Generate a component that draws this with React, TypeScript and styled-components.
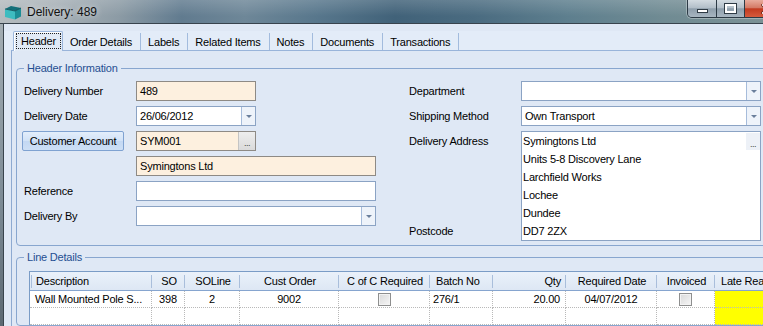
import React from "react";
import styled, { createGlobalStyle } from "styled-components";

const FONT = `"Liberation Sans", Arial, sans-serif`;

const GlobalStyle = createGlobalStyle`
  html, body {
    margin: 0;
    padding: 0;
    background: #dfe8f5;
  }
  body {
    font-family: ${FONT};
    font-size: 11px;
    letter-spacing: -0.2px;
    color: #000;
  }
`;

const tabs = [
  "Header",
  "Order Details",
  "Labels",
  "Related Items",
  "Notes",
  "Documents",
  "Transactions",
];

type Align = "left" | "center" | "right";

const columns: { title: string; width: number; align: Align }[] = [
  { title: "Description", width: 122, align: "left" },
  { title: "SO", width: 33, align: "center" },
  { title: "SOLine", width: 55, align: "center" },
  { title: "Cust Order", width: 99, align: "center" },
  { title: "C of C Required", width: 91, align: "center" },
  { title: "Batch No", width: 63, align: "left" },
  { title: "Qty", width: 73, align: "right" },
  { title: "Required Date", width: 91, align: "center" },
  { title: "Invoiced", width: 58, align: "center" },
  { title: "Late Reason", width: 86, align: "left" },
];

const address = [
  "Symingtons Ltd",
  "Units 5-8 Discovery Lane",
  "Larchfield Works",
  "Lochee",
  "Dundee",
  "DD7 2ZX",
];

const App = () => {
  return (
    <>
      <GlobalStyle />
      <Screen>
        <Window>
          <TitleBar>
            <TitleIcon width="18" height="16" viewBox="0 0 18 16">
              <path d="M1 5 L7 2 L17 4 L11 7 Z" fill="#136f79" />
              <path d="M1 5 L11 7 L11 15.5 L1 13 Z" fill="#3dbcc0" />
              <path d="M11 7 L17 4 L17 12.5 L11 15.5 Z" fill="#1b8d95" />
              <path d="M1 5 L11 7 L17 4" fill="none" stroke="#0c4d55" strokeWidth="0.8" />
            </TitleIcon>
            <TitleText>Delivery: 489</TitleText>
            <WindowControls>
              <CtrlButton $w={28}>
                <MinGlyph />
              </CtrlButton>
              <CtrlButton $w={27}>
                <MaxGlyph />
              </CtrlButton>
              <CtrlButton $w={44} $close>
                <svg width="12" height="10" viewBox="0 0 12 10">
                  <path
                    d="M2 1 L10 9 M10 1 L2 9"
                    stroke="#5a1a10"
                    strokeWidth="3.4"
                    strokeLinecap="round"
                  />
                  <path
                    d="M2 1 L10 9 M10 1 L2 9"
                    stroke="#fff"
                    strokeWidth="2"
                    strokeLinecap="round"
                  />
                </svg>
              </CtrlButton>
            </WindowControls>
          </TitleBar>
          <Body>
            <FrameEdge />
            <Client>
              <TabStrip>
                {tabs.map((t, i) =>
                  i === 0 ? (
                    <ActiveTab key={t}>
                      <FocusRect>{t}</FocusRect>
                    </ActiveTab>
                  ) : (
                    <Tab key={t}>{t}</Tab>
                  )
                )}
              </TabStrip>
              <TabPage>
                <GroupBox $top={11}>
                  <Legend>Header Information</Legend>
                  <GroupBody $pad="6px 0 4px 7px">
                    <FormGrid>
                      <FieldColumn $rows="repeat(6, 20px)">
                        <Label>Delivery Number</Label>
                        <Field $w={120} $ro>
                          <FieldText>489</FieldText>
                        </Field>

                        <Label>Delivery Date</Label>
                        <Field $w={120}>
                          <FieldText>26/06/2012</FieldText>
                          <DropButton />
                        </Field>

                        <AccountButton>Customer Account</AccountButton>
                        <Field $w={120} $ro>
                          <FieldText>SYM001</FieldText>
                          <EllipsisButton>...</EllipsisButton>
                        </Field>

                        <span />
                        <Field $w={240} $ro>
                          <FieldText>Symingtons Ltd</FieldText>
                        </Field>

                        <Label>Reference</Label>
                        <Field $w={240}>
                          <FieldText />
                        </Field>

                        <Label>Delivery By</Label>
                        <Field $w={240}>
                          <FieldText />
                          <DropButton />
                        </Field>
                      </FieldColumn>

                      <FieldColumn $rows="20px 20px 110px">
                        <Label>Department</Label>
                        <Field $w={240}>
                          <FieldText />
                          <DropButton />
                        </Field>

                        <Label>Shipping Method</Label>
                        <Field $w={240}>
                          <FieldText>Own Transport</FieldText>
                          <DropButton />
                        </Field>

                        <AddressLabels>
                          <Label>Delivery Address</Label>
                          <Label>Postcode</Label>
                        </AddressLabels>
                        <Memo>
                          <MemoLines>
                            {address.map((line) => (
                              <MemoLine key={line}>{line}</MemoLine>
                            ))}
                          </MemoLines>
                          <MemoButton>...</MemoButton>
                        </Memo>
                      </FieldColumn>
                    </FormGrid>
                  </GroupBody>
                </GroupBox>

                <GroupBox $top={5}>
                  <Legend>Line Details</Legend>
                  <GroupBody $pad="7px 0 0 12px">
                    <Grid>
                      <colgroup>
                        {columns.map((c) => (
                          <col key={c.title} style={{ width: c.width }} />
                        ))}
                      </colgroup>
                      <thead>
                        <tr>
                          {columns.map((c) => (
                            <HeadCell key={c.title} $align={c.align}>
                              {c.title}
                            </HeadCell>
                          ))}
                        </tr>
                      </thead>
                      <tbody>
                        <tr>
                          <Cell>Wall Mounted Pole S...</Cell>
                          <Cell $align="center">398</Cell>
                          <Cell $align="center">2</Cell>
                          <Cell $align="center">9002</Cell>
                          <Cell $align="center">
                            <CheckBox />
                          </Cell>
                          <Cell $pl={3}>276/1</Cell>
                          <Cell $align="right">20.00</Cell>
                          <Cell $align="center">04/07/2012</Cell>
                          <Cell $align="center">
                            <CheckBox />
                          </Cell>
                          <Cell $flag />
                        </tr>
                        <tr>
                          {columns.map((c, i) => (
                            <Cell key={c.title} $flag={i === columns.length - 1} />
                          ))}
                        </tr>
                      </tbody>
                    </Grid>
                  </GroupBody>
                </GroupBox>
              </TabPage>
            </Client>
          </Body>
        </Window>
      </Screen>
    </>
  );
};

const Screen = styled.div`
  width: 763px;
  height: 326px;
  overflow: hidden;
`;

const Window = styled.div`
  width: 790px;
  height: 380px;
  display: flex;
  flex-direction: column;
`;

const TitleBar = styled.div`
  height: 23px;
  flex: none;
  display: flex;
  align-items: flex-start;
  border-bottom: 1px solid #38434d;
  background:
    linear-gradient(180deg, rgba(255, 255, 255, 0.16), rgba(255, 255, 255, 0) 70%),
    linear-gradient(
      90deg,
      #b4bbbf 0%,
      #a7b0b6 7%,
      #8c9ba5 15%,
      #617b8f 23%,
      #6e8798 31%,
      #58778c 40%,
      #416279 50%,
      #4a6b80 60%,
      #5e7f8e 72%,
      #708b93 84%,
      #7e9396 100%
    );
`;

const TitleIcon = styled.svg`
  margin: 4px 0 0 4px;
  flex: none;
`;

const TitleText = styled.span`
  margin-left: 5px;
  padding-top: 5px;
  font-size: 12px;
  letter-spacing: 0;
  color: #111;
  text-shadow: 0 0 6px rgba(255, 255, 255, 0.75);
`;

const WindowControls = styled.div`
  margin-left: auto;
  height: 17px;
  display: flex;
  border: 1px solid #2c3a45;
  border-top: none;
  border-radius: 0 0 5px 5px;
  overflow: hidden;
  box-shadow: 0 0 0 1px rgba(255, 255, 255, 0.3);
`;

const CtrlButton = styled.div<{ $w: number; $close?: boolean }>`
  width: ${(p) => p.$w}px;
  display: flex;
  align-items: center;
  justify-content: center;
  & + & {
    border-left: 1px solid #2c3a45;
  }
  background: ${(p) =>
    p.$close
      ? "linear-gradient(180deg, #e8ab9c 0%, #d47a66 45%, #c23a20 52%, #d55a3c 100%)"
      : "linear-gradient(180deg, #d3dbe1 0%, #b3bfc9 45%, #8e9eab 52%, #a8b6c1 100%)"};
`;

const MinGlyph = styled.span`
  width: 9px;
  height: 2px;
  margin-top: 5px;
  background: #fff;
  border: 1px solid #2f3b45;
`;

const MaxGlyph = styled.span`
  width: 7px;
  height: 5px;
  border: 2px solid #fff;
  outline: 1px solid #2f3b45;
`;

const Body = styled.div`
  flex: 1;
  display: flex;
`;

const FrameEdge = styled.div`
  width: 3px;
  flex: none;
  border-right: 1px solid #39444d;
  background: linear-gradient(180deg, #a3adb3, #7d8b95 50%, #4d5962);
`;

const Client = styled.div`
  flex: 1;
  background: #dfe8f5;
  padding-top: 7px;
  display: flex;
  flex-direction: column;
`;

const TabStrip = styled.div`
  height: 19px;
  display: flex;
  padding-left: 9px;
  background: #e3ecf8;
`;

const Tab = styled.div`
  margin-top: 2px;
  padding: 0 8px 0 7px;
  border-right: 1px solid #a2bbdd;
  display: flex;
  align-items: center;
  white-space: nowrap;
`;

const ActiveTab = styled.div`
  position: relative;
  z-index: 1;
  height: 20px;
  padding: 1px 1px 0 2px;
  box-sizing: border-box;
  border: 1px solid #9cb7dc;
  border-bottom: none;
  border-radius: 2px 2px 0 0;
  background: #e1eaf6;
  box-shadow: inset 1px 1px 0 #fff;
  display: flex;
`;

const FocusRect = styled.span`
  flex: 1;
  padding: 0 4px;
  margin-bottom: 2px;
  border: 1px dotted #222;
  display: flex;
  align-items: center;
`;

const TabPage = styled.div`
  flex: 1;
  margin-left: 7px;
  padding-left: 4px;
  border-left: 1px solid #8eaad1;
  border-top: 1px solid #99b4da;
`;

const GroupBox = styled.fieldset<{ $top: number }>`
  margin: ${(p) => p.$top}px 12px 0 0;
  padding: 0;
  min-width: 0;
  border: 1px solid #88a6cf;
  border-radius: 4px;
`;

const Legend = styled.legend`
  margin-left: 7px;
  padding: 0 3px;
  font-size: 11px;
  line-height: 13px;
  color: #1f4f92;
`;

const GroupBody = styled.div<{ $pad: string }>`
  padding: ${(p) => p.$pad};
`;

const FormGrid = styled.div`
  display: grid;
  grid-template-columns: 352px 352px;
  column-gap: 33px;
  align-items: start;
`;

const FieldColumn = styled.div<{ $rows: string }>`
  display: grid;
  grid-template-columns: 112px 240px;
  grid-template-rows: ${(p) => p.$rows};
  row-gap: 5px;
  align-items: center;
`;

const Label = styled.span`
  line-height: 18px;
  white-space: nowrap;
`;

const Field = styled.div<{ $w: number; $ro?: boolean }>`
  width: ${(p) => p.$w}px;
  height: 20px;
  box-sizing: border-box;
  display: flex;
  border: 1px solid ${(p) => (p.$ro ? "#8e8a85" : "#8ba3c4")};
  background: ${(p) => (p.$ro ? "#fdf0df" : "#fff")};
`;

const FieldText = styled.span`
  flex: 1;
  padding-left: 3px;
  line-height: 18px;
  white-space: nowrap;
  overflow: hidden;
`;

const DropButton = styled.span`
  width: 13px;
  flex: none;
  border-left: 1px solid #a6bcdb;
  background: #eef3fa;
  display: flex;
  align-items: center;
  justify-content: center;
  &::after {
    content: "";
    border-left: 3px solid transparent;
    border-right: 3px solid transparent;
    border-top: 3px solid #6a7f9b;
    margin-top: 1px;
  }
`;

const EllipsisButton = styled.span`
  width: 16px;
  flex: none;
  background: linear-gradient(180deg, #eeeeee, #dadada);
  border-left: 1px solid #c4c4c4;
  color: #444;
  font-size: 9px;
  line-height: 22px;
  text-align: center;
  letter-spacing: -0.5px;
`;

const AccountButton = styled.div`
  width: 102px;
  height: 20px;
  margin-left: -2px;
  box-sizing: border-box;
  border: 1px solid #7fa2d1;
  border-radius: 2px;
  background: linear-gradient(180deg, #e3eefb 0%, #d1e2f7 50%, #c3d8f3 51%, #cddff5 100%);
  display: flex;
  align-items: center;
  justify-content: center;
  white-space: nowrap;
`;

const AddressLabels = styled.div`
  height: 110px;
  align-self: stretch;
  display: flex;
  flex-direction: column;
  justify-content: space-between;
  padding: 1px 0;
  box-sizing: border-box;
`;

const Memo = styled.div`
  width: 240px;
  height: 110px;
  align-self: stretch;
  box-sizing: border-box;
  border: 1px solid #8ba3c4;
  background: #fff;
  display: flex;
  align-items: flex-start;
`;

const MemoLines = styled.div`
  flex: 1;
  padding-left: 1px;
`;

const MemoLine = styled.div`
  line-height: 18px;
  white-space: nowrap;
`;

const MemoButton = styled.span`
  width: 14px;
  height: 17px;
  margin-top: 1px;
  background: #edf1f7;
  color: #444;
  font-size: 9px;
  line-height: 22px;
  text-align: center;
  letter-spacing: -0.5px;
`;

const Grid = styled.table`
  table-layout: fixed;
  width: 771px;
  border-collapse: separate;
  border-spacing: 0;
  border-left: 1px solid #7a9cc6;
  border-top: 1px solid #7a9cc6;
`;

const HeadCell = styled.th<{ $align: Align }>`
  height: 18px;
  padding: 0 5px 0 6px;
  font-weight: normal;
  font-size: 11px;
  text-align: ${(p) => p.$align};
  white-space: nowrap;
  overflow: hidden;
  border-bottom: 1px solid #86a5cf;
  background:
    linear-gradient(#a9bedb, #a9bedb) right center / 1px 13px no-repeat,
    linear-gradient(180deg, #eaf1fa 0%, #dde7f4 100%);
  &:first-child {
    background:
      linear-gradient(#a9bedb, #a9bedb) 1px center / 1px 13px no-repeat,
      linear-gradient(#a9bedb, #a9bedb) right center / 1px 13px no-repeat,
      linear-gradient(180deg, #eaf1fa 0%, #dde7f4 100%);
  }
  &:last-child {
    background: linear-gradient(180deg, #eaf1fa 0%, #dde7f4 100%);
  }
`;

const Cell = styled.td<{ $align?: Align; $flag?: boolean; $pl?: number }>`
  height: 16px;
  padding: 0 5px 0 ${(p) => p.$pl ?? 5}px;
  text-align: ${(p) => p.$align ?? "left"};
  white-space: nowrap;
  overflow: hidden;
  line-height: 14px;
  background: ${(p) => (p.$flag ? "#ffff00" : "#fff")};
  border-right: 1px dotted #b9b9b9;
  border-bottom: 1px dotted #b9b9b9;
`;

const CheckBox = styled.span`
  display: inline-block;
  vertical-align: middle;
  width: 11px;
  height: 11px;
  border: 1px solid #8e8f8f;
  background: linear-gradient(135deg, #d9d9d9, #f6f6f6);
  box-shadow: inset 0 0 0 1px #f3f3f3;
`;

export default App;
